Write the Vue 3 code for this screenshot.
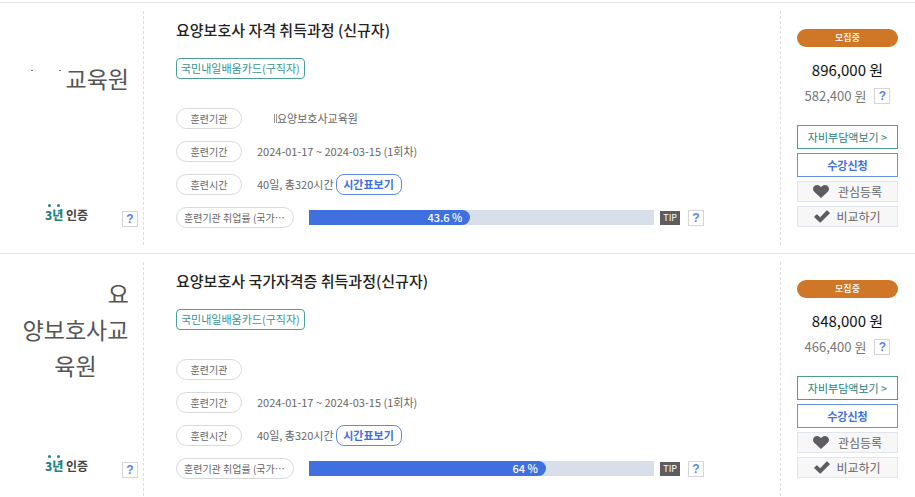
<template>
  <main class="course-list">
    <article v-for="course in courses" :key="course.id" class="course">
      <div class="course-org">
        <div class="org-name">
          <p
            v-for="line in course.orgLines"
            :key="line.text"
            class="org-line"
            :class="line.align"
          >
            <template v-if="line.marks">
              <i class="org-mark" />
              <i class="org-mark" />
            </template>
            <span>{{ line.text }}</span>
          </p>
        </div>
        <div class="org-cert">
          <strong class="cert">
            <span class="cert-years"><b>3</b><b>년</b></span> 인증
          </strong>
          <button type="button" class="help">?</button>
        </div>
      </div>

      <div class="course-info">
        <h2 class="course-title">{{ course.title }}</h2>
        <span class="card-badge">국민내일배움카드(구직자)</span>
        <dl class="details">
          <div class="detail">
            <dt class="pill">훈련기관</dt>
            <dd v-if="course.org" class="org-value">
              <i class="org-stroke" />{{ course.org }}
            </dd>
          </div>
          <div class="detail">
            <dt class="pill">훈련기간</dt>
            <dd>{{ course.period }}</dd>
          </div>
          <div class="detail">
            <dt class="pill">훈련시간</dt>
            <dd>
              {{ course.hours }}
              <button type="button" class="timetable">시간표보기</button>
            </dd>
          </div>
          <div class="detail">
            <dt class="pill wide">훈련기관 취업률 (국가⋯</dt>
            <dd class="rate">
              <div class="bar">
                <div class="bar-fill" :style="{ width: fillWidth(course.rate) }">
                  {{ course.rate }} %
                </div>
              </div>
              <span class="tip">TIP</span>
              <button type="button" class="help">?</button>
            </dd>
          </div>
        </dl>
      </div>

      <div class="course-side">
        <span class="status">모집중</span>
        <p class="price">{{ course.price }} 원</p>
        <p class="own-price">
          {{ course.ownPrice }} 원
          <button type="button" class="help">?</button>
        </p>
        <div class="actions">
          <button type="button" class="action cost">자비부담액보기 &gt;</button>
          <button type="button" class="action apply">수강신청</button>
          <button type="button" class="action sub">
            <svg class="icon" viewBox="0 0 16 13" aria-hidden="true">
              <path d="M8 13 1.200 6.700C-.4 5.100-.4 2.700 1.200 1.200 2.800-.4 5.400-.4 7 1.200L8 2.100l1-.9c1.600-1.600 4.200-1.600 5.800 0 1.600 1.500 1.600 3.900 0 5.500Z" />
            </svg>
            관심등록
          </button>
          <button type="button" class="action sub check">
            <svg class="icon" viewBox="0 0 16 13" aria-hidden="true">
              <path d="M13.300.4 15.700 2.700Q16 3.100 15.700 3.500L6.800 12.300Q6.200 12.800 5.600 12.300L.3 7.300Q0 6.900.3 6.500L2.500 4.400Q2.900 4.100 3.300 4.400L6.200 7.200 12.500.4Q12.900 0 13.300.4Z" />
            </svg>
            비교하기
          </button>
        </div>
      </div>
    </article>
  </main>
</template>

<script setup>
const courses = [
  {
    id: 1,
    orgLines: [{ text: '교육원', align: 'end', marks: true }],
    title: '요양보호사 자격 취득과정 (신규자)',
    org: '요양보호사교육원',
    period: '2024-01-17 ~ 2024-03-15 (1회차)',
    hours: '40일, 총320시간',
    rate: 43.6,
    price: '896,000',
    ownPrice: '582,400'
  },
  {
    id: 2,
    orgLines: [
      { text: '요', align: 'end' },
      { text: '양보호사교', align: 'center' },
      { text: '육원', align: 'center' }
    ],
    title: '요양보호사 국가자격증 취득과정(신규자)',
    org: '',
    period: '2024-01-17 ~ 2024-03-15 (1회차)',
    hours: '40일, 총320시간',
    rate: 64,
    price: '848,000',
    ownPrice: '466,400'
  }
]

// the fill runs a little past its value to leave room for the round cap
function fillWidth(rate) {
  return `${Math.min(rate * 1.072, 100)}%`
}
</script>

<style>
body {
  margin: 0;
  background: #fff;
}
</style>

<style scoped>
.course-list {
  padding-top: 2px;
  font-family: "Noto Sans CJK KR", "Noto Sans", sans-serif;
  font-size: 11px;
  color: #666;
}

.course-list * {
  box-sizing: border-box;
}

p,
h2,
dl,
dd {
  margin: 0;
}

button {
  padding: 0;
  font-family: inherit;
  background: #fff;
  cursor: pointer;
}

.course {
  display: grid;
  grid-template-columns: 144px 1fr 135px;
  padding: 8px 0;
  border-top: 1px solid #e4e4e4;
}

.course:last-child {
  padding-bottom: 0;
}

.course-org {
  display: flex;
  flex-direction: column;
  min-height: 234px;
  padding-bottom: 18px;
  border-right: 1px dashed #ddd;
}

.org-name {
  display: flex;
  flex-direction: column;
  justify-content: center;
  height: 134px;
  padding: 0 14px 0 22px;
  font-size: 23px;
  line-height: 36px;
  color: #555;
}

.org-line {
  display: flex;
  justify-content: center;
}

.org-line.end {
  justify-content: flex-end;
}

.org-mark {
  width: 2px;
  height: 1px;
  margin: 10px 26px 0 0;
  background: #777;
}

.org-mark + .org-mark {
  margin-right: 5px;
}

.org-cert {
  display: flex;
  align-items: flex-end;
  justify-content: space-between;
  margin-top: auto;
  padding: 0 5px 0 45px;
}

.cert {
  padding-bottom: 4px;
  font-size: 12px;
  line-height: 16px;
  color: #444;
}

.cert-years {
  color: #22837f;
}

.cert-years b {
  position: relative;
}

.cert-years b::before {
  content: "";
  position: absolute;
  top: -2px;
  left: calc(50% - 1px);
  width: 3px;
  height: 3px;
  border-radius: 50%;
  background: #22837f;
}

.help {
  flex: none;
  width: 16px;
  height: 16px;
  border: 1px solid #d5d5d5;
  font-family: "Liberation Sans", Arial, sans-serif;
  font-size: 12px;
  font-weight: 700;
  line-height: 14px;
  color: #5a84ea;
}

.course-info {
  padding: 8px 76px 0 32px;
}

.course-title {
  font-size: 15px;
  font-weight: 500;
  line-height: 21px;
  color: #222;
}

.card-badge {
  display: block;
  width: fit-content;
  margin-top: 18px;
  padding: 0 4px;
  border: 1px solid #4a9f9c;
  border-radius: 4px;
  line-height: 19px;
  color: #3a9692;
}

.details {
  display: flex;
  flex-direction: column;
  gap: 12px;
  margin-top: 29px;
}

.detail {
  display: flex;
  align-items: center;
  gap: 15px;
  height: 21px;
}

.pill {
  flex: none;
  width: 66px;
  border: 1px solid #d9d9d9;
  border-radius: 11px;
  font-size: 10px;
  line-height: 19px;
  text-align: center;
}

.pill.wide {
  width: 118px;
  padding-left: 7px;
  text-align: left;
}

.detail dd {
  display: flex;
  align-items: center;
  gap: 2px;
  line-height: 19px;
}

.detail .org-value {
  gap: 0;
  padding-left: 17px;
}

.org-stroke {
  width: 3px;
  height: 9px;
  border: solid #999;
  border-width: 0 1px;
}

.timetable {
  width: 66px;
  height: 21px;
  border: 1px solid #5f88e8;
  border-radius: 8px;
  font-size: 11px;
  font-weight: 700;
  line-height: 19px;
  color: #3f6fdd;
}

.detail .rate {
  flex: 1;
  gap: 6px;
}

.bar {
  flex: 1;
  height: 15px;
  background: #d8deea;
}

.bar-fill {
  height: 15px;
  padding-right: 8px;
  border-radius: 0 8px 8px 0;
  background: #4070df;
  font-weight: 500;
  line-height: 14px;
  text-align: right;
  color: #fff;
}

.tip {
  padding: 0 3px;
  margin-right: 2px;
  background: #5c5c61;
  font-size: 9px;
  line-height: 14px;
  color: #fff;
}

.course-side {
  padding: 18px 17px 0 16px;
  border-left: 1px dashed #ddd;
  text-align: center;
}

.status {
  display: block;
  border-radius: 9px;
  background: #cf7627;
  font-size: 9px;
  font-weight: 500;
  line-height: 18px;
  color: #fff;
}

.price {
  margin-top: 10px;
  font-size: 15px;
  line-height: 26px;
  color: #111;
}

.own-price {
  display: flex;
  align-items: center;
  justify-content: center;
  gap: 8px;
  font-size: 13px;
  line-height: 26px;
  color: #777;
}

.actions {
  display: flex;
  flex-direction: column;
  gap: 4px;
  margin-top: 16px;
}

.action {
  display: flex;
  align-items: center;
  justify-content: center;
  height: 24px;
  border: 1px solid;
  font-size: 11px;
}

.action.cost {
  border-color: #4a9f94;
  color: #2a8278;
}

.action.apply {
  border-color: #6a8fe8;
  font-weight: 700;
  color: #3f6fdd;
}

.action.sub {
  gap: 9px;
  height: 21px;
  border-color: #e1e5ec;
  background: #f7f7f7;
  font-size: 12px;
  color: #666;
}

.action.check {
  gap: 6px;
}

.icon {
  width: 16px;
  height: 13px;
  fill: #5c5c61;
}
</style>
